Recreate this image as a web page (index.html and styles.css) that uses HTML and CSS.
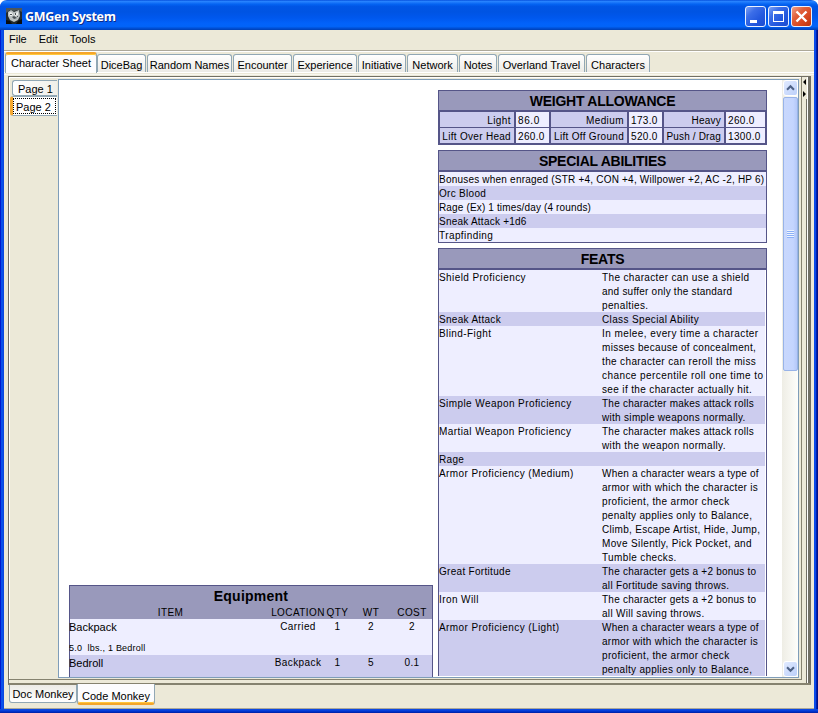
FILE: index.html
```html
<!DOCTYPE html>
<html lang="en">
<head>
<meta charset="utf-8">
<title>GMGen System</title>
<link rel="stylesheet" href="styles.css">
</head>
<body>
<div class="window">
  <header class="titlebar">
    <svg class="app-icon" width="16" height="16" viewBox="0 0 16 16">
      <rect width="16" height="16" fill="#222a2c"/>
      <path d="M0 0H16V4L12 2L8 3L4 2L0 5Z" fill="#4e575a"/>
      <path d="M2 4L5 2L8 4L13 2L14 8L12 12L8 14L4 12L2 8Z" fill="#b9bfbf"/>
      <path d="M3 5L5 4L7 6L6 8L4 8ZM8 6L12 4L12 7L9 8Z" fill="#eef0ee"/>
      <path d="M4 6H6V7H4ZM9 5H10V7H9ZM6 9L8 8L11 10L8 11ZM11 8H12V9H11Z" fill="#4a5153"/>
      <path d="M0 12L4 13L6 16H0ZM16 11L12 13L10 16H16Z" fill="#090d0f"/>
    </svg>
    <h1 class="title">GMGen System</h1>
    <div class="controls">
      <svg class="control" viewBox="0 0 19 19"><path d="M4 13H11V16H4Z" fill="#fff"/></svg>
      <svg class="control" viewBox="0 0 19 19"><path d="M4 4H15V15H4ZM5 7V14H14V7Z" fill="#fff" fill-rule="evenodd"/></svg>
      <svg class="control close" viewBox="0 0 19 19"><path d="M4.5 4.5L14.5 14.5M14.5 4.5L4.5 14.5" stroke="#fff" stroke-width="2.4"/></svg>
    </div>
  </header>
  <nav class="menu"><span>File</span><span>Edit</span><span>Tools</span></nav>
  <nav class="tabs">
    <span class="tab active w-sheet">Character Sheet</span>
    <span class="tab w-dice">DiceBag</span>
    <span class="tab w-names">Random Names</span>
    <span class="tab w-enc">Encounter</span>
    <span class="tab w-exp">Experience</span>
    <span class="tab w-init">Initiative</span>
    <span class="tab w-net">Network</span>
    <span class="tab w-notes">Notes</span>
    <span class="tab w-travel">Overland Travel</span>
    <span class="tab w-chars">Characters</span>
  </nav>
  <main class="pane">
    <div class="split-left">
      <nav class="pages">
        <span class="page">Page 1</span>
        <span class="page selected"><span class="focus">Page 2</span></span>
      </nav>
      <div class="viewer">
        <div class="sheet">
          <section class="equipment">
            <div class="equip-head">
              <h2>Equipment</h2>
              <div class="equip-row cols"><span>ITEM</span><span>LOCATION</span><span>QTY</span><span>WT</span><span>COST</span></div>
            </div>
            <div class="equip-row light">
              <div class="item">Backpack<small>5.0 &nbsp;lbs., 1 Bedroll</small></div><span>Carried</span><span>1</span><span>2</span><span>2</span>
            </div>
            <div class="equip-row dark">
              <div class="item">Bedroll</div><span>Backpack</span><span>1</span><span>5</span><span>0.1</span>
            </div>
          </section>
          <div class="right-column">
            <section class="weight">
              <h2>WEIGHT ALLOWANCE</h2>
              <div class="weights">
                <span class="label">Light</span><span class="value wide">86.0</span><span class="label">Medium</span><span class="value">173.0</span><span class="label snug">Heavy</span><span class="value">260.0</span>
                <span class="label tight">Lift Over Head</span><span class="value">260.0</span><span class="label tight">Lift Off Ground</span><span class="value">520.0</span><span class="label narrow">Push / Drag</span><span class="value">1300.0</span>
              </div>
            </section>
            <section class="box abilities">
              <h2>SPECIAL ABILITIES</h2>
              <p class="light bonus">Bonuses when enraged (STR +4, CON +4, Willpower +2, AC -2, HP 6)</p>
              <p class="dark tight">Orc Blood</p>
              <p class="light narrow">Rage (Ex) 1 times/day (4 rounds)</p>
              <p class="dark snug">Sneak Attack +1d6</p>
              <p class="light">Trapfinding</p>
            </section>
            <section class="box feats">
              <h2>FEATS</h2>
              <div class="feat light"><span>Shield Proficiency</span><span>The character can use a shield<br><b class="snug">and suffer only the standard</b><br>penalties.</span></div>
              <div class="feat dark"><span class="tight">Sneak Attack</span><span>Class Special Ability</span></div>
              <div class="feat light"><span>Blind-Fight</span><span><b class="full">In melee, every time a character</b><br><b class="tight">misses because of concealment,</b><br>the character can reroll the miss<br><b class="full">chance percentile roll one time to</b><br>see if the character actually hit.</span></div>
              <div class="feat dark"><span>Simple Weapon Proficiency</span><span><b class="snug">The character makes attack rolls</b><br><b class="tight">with simple weapons normally.</b></span></div>
              <div class="feat light"><span>Martial Weapon Proficiency</span><span><b class="snug">The character makes attack rolls</b><br>with the weapon normally.</span></div>
              <div class="feat dark"><span class="tight">Rage</span></div>
              <div class="feat light"><span>Armor Proficiency (Medium)</span><span><b class="snug">When a character wears a type of</b><br><b class="tight">armor with which the character is</b><br>proficient, the armor check<br><b class="tight">penalty applies only to Balance,</b><br><b class="tight">Climb, Escape Artist, Hide, Jump,</b><br>Move Silently, Pick Pocket, and<br>Tumble checks.</span></div>
              <div class="feat dark"><span class="tight">Great Fortitude</span><span><b class="snug">The character gets a +2 bonus to</b><br><b class="tight">all Fortitude saving throws.</b></span></div>
              <div class="feat light"><span>Iron Will</span><span><b class="snug">The character gets a +2 bonus to</b><br><b class="tight">all Will saving throws.</b></span></div>
              <div class="feat dark"><span>Armor Proficiency (Light)</span><span><b class="snug">When a character wears a type of</b><br><b class="tight">armor with which the character is</b><br>proficient, the armor check<br><b class="tight">penalty applies only to Balance,</b></span></div>
            </section>
          </div>
        </div>
        <div class="scrollbar">
          <svg class="arrow" viewBox="0 0 15 16"><path d="M3.5 10L7.5 6L11.5 10" fill="none" stroke="#4d6185" stroke-width="2.4"/></svg>
          <div class="thumb"><i></i><i></i><i></i><i></i></div>
          <svg class="arrow down" viewBox="0 0 15 16"><path d="M3.5 6L7.5 10L11.5 6" fill="none" stroke="#4d6185" stroke-width="2.4"/></svg>
        </div>
      </div>
    </div>
    <div class="divider"><svg width="5" height="24" viewBox="0 0 5 24"><path d="M4 2V8L1 5ZM1 14V20L4 17Z" fill="#000"/></svg></div>
  </main>
  <footer class="bottom-tabs">
    <span class="btab">Doc Monkey</span>
    <span class="btab active">Code Monkey</span>
  </footer>
</div>
</body>
</html>
```
FILE: styles.css
```css
* { box-sizing: border-box; }
body {
  margin: 0;
  background: #fff;
  font: 11px/14px "Liberation Sans", Arial, sans-serif;
  color: #000;
  overflow: hidden;
}
h1, h2, p { margin: 0; }
.window {
  width: 818px;
  height: 713px;
  display: flex;
  flex-direction: column;
  border-radius: 7px 7px 0 0;
  overflow: hidden;
  padding: 0 4px 4px;
  background:
    linear-gradient(#0b47e0, #0b47e0 1px, #0038d8 2px, #001ea0 4px) bottom / 100% 4px no-repeat,
    linear-gradient(90deg, #001ad0 0 1px, #0a50ea 1px 3px, #0a48e0 3px 4px) left / 4px 100% no-repeat,
    linear-gradient(90deg, #0a4ae8 0 2px, #0020b0 2px 3px, #001088 3px) right / 4px 100% no-repeat,
    #ece9d8;
}

/* Title bar */
.titlebar {
  flex: none;
  height: 30px;
  margin: 0 -4px;
  padding: 2px 6px 0;
  display: flex;
  align-items: center;
  background: linear-gradient(#0048d8 0, #2a85ff 4%, #1c78fa 8%, #0463f2 14%, #0055e5 22%, #0054e3 40%, #0058ee 60%, #0262fa 78%, #0264f8 88%, #0050d8 94%, #0040b4 100%);
}
.title {
  flex: 1;
  margin-left: 3px;
  font: bold 12.5px/16px "Open Sans", sans-serif;
  letter-spacing: -.28px;
  color: #fff;
  text-shadow: 1px 1px 0 #0a2a88;
  padding-top: 2px;
}
.controls { display: flex; gap: 2px; }
.control {
  width: 21px;
  height: 21px;
  border: 1px solid #e8f0ff;
  border-radius: 3px;
  background: linear-gradient(135deg, #7da2f4, #3c6ee8 30%, #2358de 65%, #1c4cd0);
}
.close { background: linear-gradient(135deg, #f0a088, #e0603c 35%, #d84820 65%, #b83410); }

/* Menu and top tabs */
.menu {
  flex: none;
  height: 22px;
  display: flex;
  gap: 12px;
  padding: 2px 5px 0;
  border-bottom: 1px solid #fff;
  box-shadow: inset 0 -1px #aca899;
}
.tabs {
  flex: none;
  height: 24px;
  display: flex;
  align-items: flex-start;
  padding-left: 1px;
  background: linear-gradient(#fff, #fff) 0 20px / 100% 1px no-repeat, linear-gradient(#f8f7f0, #f8f7f0) 0 22px / 100% 1px no-repeat;
}
.tab {
  flex: none;
  height: 18px;
  margin: 2px 1px 0 0;
  padding-top: 3px;
  text-align: center;
  white-space: nowrap;
  border: 1px solid #91a7b4;
  border-bottom: 0;
  border-radius: 3px 3px 0 0;
  background: linear-gradient(#fff, #ecebe6);
}
.tab.active {
  height: 21px;
  margin: 0;
  padding-top: 2px;
  border-top: 2px solid #f5a52a;
  background: #fcfcfe;
  box-shadow: inset 0 1px #ffc73c;
}
.w-sheet { width: 92px; }
.w-dice { width: 49px; }
.w-names { width: 85px; }
.w-enc { width: 59px; }
.w-exp { width: 64px; }
.w-init { width: 48px; }
.w-net { width: 51px; }
.w-notes { width: 38px; }
.w-travel { width: 87px; }
.w-chars { width: 64px; }

/* Split pane */
.pane {
  flex: none;
  height: 609px;
  margin: 0 3px 0 4px;
  display: flex;
  border: 1px solid #716f64;
  border-bottom: 2px solid #85826f;
}
.split-left {
  flex: none;
  width: 793px;
  display: flex;
  margin-bottom: 3px;
  border: solid #85826f;
  border-width: 0 1px 1px 0;
  box-shadow: inset 1px 1px #fff;
  padding: 2px 0 1px 1px;
}
.pages { width: 48px; flex: none; padding: 1px 1px 0 0; display: flex; flex-direction: column; align-items: flex-end; }
.page {
  width: 45px;
  height: 16px;
  padding: 2px 0 0 5px;
  border: 1px solid #91a7b4;
  border-right: 0;
  border-radius: 3px 0 0 3px;
  background: linear-gradient(90deg, #fff, #f0efe9);
  line-height: 13px;
}
.page.selected {
  width: 47px;
  height: 20px;
  padding: 1px 1px 1px 0;
  border-left: 3px solid #f5a830;
  background: #fff;
}
.focus { display: block; height: 16px; padding: 1px 0 0 2px; border: 1px dotted #000; line-height: 14px; }
.viewer {
  width: 741px;
  flex: none;
  display: flex;
  border: 1px solid #7f9db9;
  background: #fff;
}
.sheet { width: 723px; flex: none; height: 597px; display: flex; align-items: flex-start; overflow: hidden; font-size: 10px; letter-spacing: .42px; white-space: nowrap; }
.light { background: #eef; }
.dark { background: #cce; }

/* Equipment table */
.equipment { width: 364px; margin: 505px 5px 0 10px; flex: none; border: 1px solid #558; height: 120px; }
.equip-head { background: #99b; height: 33px; }
.equipment h2 { text-align: center; font-size: 14px; line-height: 20px; letter-spacing: .25px; }
.equip-row { display: grid; grid-template-columns: 201px 54px 25px 42px 40px; text-align: center; }
.equip-row.light { height: 36px; padding-top: 1px; }
.equip-row.dark { height: 40px; padding-top: 1px; }
.cols { line-height: 13px; }
.item { text-align: left; font-size: 11px; letter-spacing: 0; line-height: 15px; margin-left: -1px; }
.item small { display: block; font-size: 9px; padding-top: 7px; line-height: 13px; letter-spacing: .22px; }

/* Right column */
.right-column { width: 329px; flex: none; margin-top: 10px; display: flex; flex-direction: column; }
.right-column h2 { height: 21px; font-size: 14px; line-height: 20px; letter-spacing: -.25px; text-align: center; background: #99b; border-bottom: 2px solid #558; }
.weight { border: 1px solid #558; height: 55px; background: #558; margin-bottom: 5px; }
.weights { display: grid; grid-template-columns: 74px 33px 76px 33px 60px 39px; grid-template-rows: 15px 15px; gap: 1px 2px; padding: 0 1px; line-height: 17px; }
.label { background: #cce; text-align: right; padding-right: 3px; }
.value { background: #eef; padding-left: 2px; letter-spacing: .35px; }
.wide { letter-spacing: .6px; }
.box { border: 1px solid #558; }
.box p { height: 14px; line-height: 15px; }
.abilities { height: 93px; margin-bottom: 5px; }
.feats { border-bottom: 0; }
.feat { display: grid; grid-template-columns: 163px 1fr; margin-right: 1px; }
.feat span { position: relative; top: 1px; }
.feat span + span { letter-spacing: .36px; }
.feat b { font-weight: normal; }

/* Tracking steps for the sheet text */
.full { letter-spacing: .43px; }
.tight { letter-spacing: .3px; }
.snug { letter-spacing: .23px; }
.bonus { letter-spacing: .21px; }
.narrow { letter-spacing: .15px; }

/* Scrollbar */
.scrollbar { width: 16px; flex: none; display: flex; flex-direction: column; padding-left: 1px; background: linear-gradient(90deg, #eeede5, #fefefb); }
.arrow { flex: none; width: 15px; height: 16px; border: 1px solid #fff; border-radius: 3px; background: linear-gradient(135deg, #e1eafe, #bcd0fb); }
.arrow.down { margin-top: auto; }
.thumb {
  height: 274px;
  margin-top: 1px;
  display: flex;
  flex-direction: column;
  align-items: center;
  justify-content: center;
  gap: 1px;
  border: 1px solid #98b3e8;
  border-radius: 2px;
  background: linear-gradient(90deg, #c9d8fc 0, #c4d5ff 70%, #b4c8f8);
}
.thumb i { width: 7px; height: 1px; background: #8cb0f8; box-shadow: 0 -1px #eef4fe; }

.divider { flex: 1; border: solid #716f64; border-width: 0 2px 0 0; background: linear-gradient(#716f64, #716f64) 4px 22px / 1px 100% no-repeat, linear-gradient(#fff, #fff) 5px 0 / 1px 100% no-repeat; }
.divider svg { display: block; }

/* Bottom tabs */
.bottom-tabs { flex: 1; display: flex; align-items: flex-start; padding-left: 5px; border-bottom: 1px solid #aca899; }
.btab { width: 68px; height: 18px; padding-top: 2px; text-align: center; border: 1px solid #91a7b4; border-top: 0; border-radius: 0 0 3px 3px; background: linear-gradient(#ecebe6, #fff); }
.btab.active { width: 78px; height: 21px; margin-top: -1px; padding-top: 5px; border-bottom: 2px solid #f5a52a; background: #fcfcfe; position: relative; box-shadow: inset 0 -1px #ffc73c; }
```
